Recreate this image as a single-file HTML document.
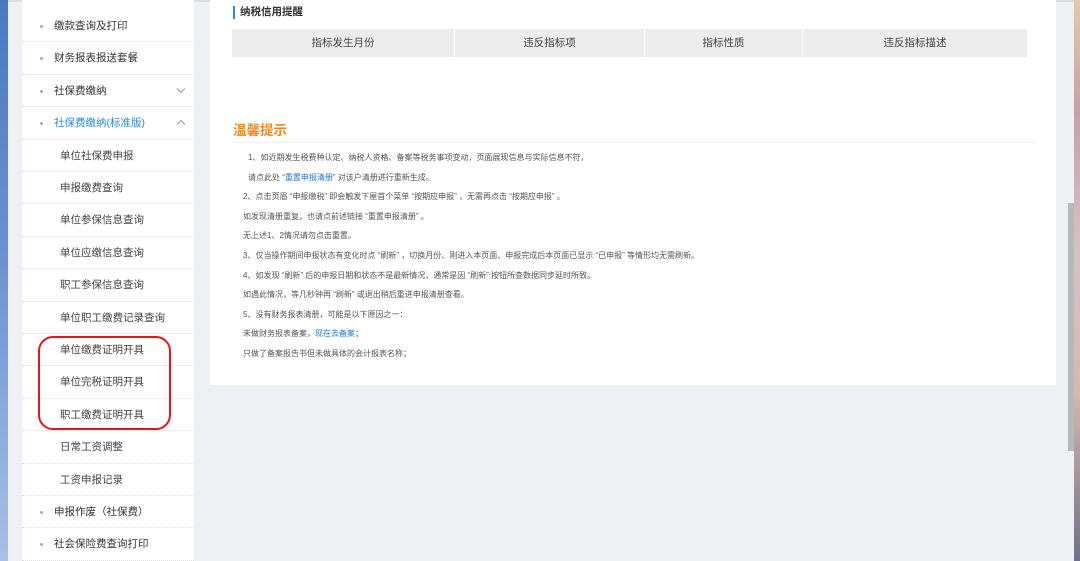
<!DOCTYPE html>
<html><head><meta charset="utf-8"><style>
*{margin:0;padding:0;box-sizing:border-box}
body{width:1080px;height:561px;overflow:hidden;background:#eef0f3;font-family:"Liberation Sans","Noto Sans CJK SC",sans-serif;position:relative}
.edge{position:absolute;left:0;top:0;width:8px;height:561px;background:linear-gradient(#4a78c0,#6f95d2 50%,#a9c0e6)}
.side{position:absolute;left:22px;top:0;width:172px;height:561px;background:#fff}
.it{position:absolute;left:0;width:172px;height:32.4px;border-bottom:1px dotted #ddd;font-size:10.5px;color:#333;line-height:32px}
.it.t{padding-left:32px}.it.s{padding-left:38px;color:#444}
.it.t:before{content:"";position:absolute;left:18px;top:15px;width:3px;height:3px;background:#aaa;border-radius:50%}
.arr{position:absolute;right:8px;top:12px}
.red{position:absolute;left:38px;top:336px;width:133px;height:94px;border:2.5px solid #e8141c;border-radius:15px}
.main{position:absolute;left:210px;top:0;width:846px;height:385px;background:#fff}
.ttl{position:absolute;left:23px;top:6px;font-size:10.5px;font-weight:bold;color:#333;border-left:2px solid #2a8ae0;padding-left:5px;line-height:13px}
.th{position:absolute;left:22px;top:29px;width:795px;height:28px;background:#ededed;display:flex;font-size:10.5px;color:#444;line-height:28px;text-align:center}
.th div{border-right:1px solid #fff}
.wh{position:absolute;left:23px;top:119px;font-size:13.5px;color:#f08a1c;font-weight:bold}
.hr{position:absolute;left:22px;top:142px;width:804px;height:1px;background:#eee}
.tx{position:absolute;left:33px;top:148px;font-size:8px;color:#555;line-height:19.6px;white-space:nowrap}
.tx a{color:#1a7ad8}
.sb{position:absolute;left:1068px;top:203px;width:6px;height:248px;background:#b8b8b8}
.re{position:absolute;left:1074px;top:0;width:6px;height:561px;background:linear-gradient(#e6c8a8,#c8a0a4 20%,#d8c0c4 45%,#d8b8a8 70%,#70708c)}
.top{position:absolute;left:0;top:0;width:1080px;height:2px;background:#ddd}
</style></head><body>
<div class="top"></div>
<div class="edge"></div>
<div class="side">
<div class="it t" style="top:10px">缴款查询及打印</div>
<div class="it t" style="top:42.4px">财务报表报送套餐</div>
<div class="it t" style="top:74.8px">社保费缴纳<svg class="arr" width="10" height="7" viewBox="0 0 10 7"><path d="M1 1.5L5 5.5L9 1.5" fill="none" stroke="#999" stroke-width="1"/></svg></div>
<div class="it t" style="top:107.2px;color:#2a8ae0">社保费缴纳(标准版)<svg class="arr" width="10" height="7" viewBox="0 0 10 7"><path d="M1 5.5L5 1.5L9 5.5" fill="none" stroke="#999" stroke-width="1"/></svg></div>
<div class="it s" style="top:139.6px">单位社保费申报</div>
<div class="it s" style="top:172px">申报缴费查询</div>
<div class="it s" style="top:204.4px">单位参保信息查询</div>
<div class="it s" style="top:236.8px">单位应缴信息查询</div>
<div class="it s" style="top:269.2px">职工参保信息查询</div>
<div class="it s" style="top:301.6px">单位职工缴费记录查询</div>
<div class="it s" style="top:334px">单位缴费证明开具</div>
<div class="it s" style="top:366.4px">单位完税证明开具</div>
<div class="it s" style="top:398.8px">职工缴费证明开具</div>
<div class="it s" style="top:431.2px">日常工资调整</div>
<div class="it s" style="top:463.6px">工资申报记录</div>
<div class="it t" style="top:496px">申报作废（社保费）</div>
<div class="it t" style="top:528.4px">社会保险费查询打印</div>
</div>
<div class="red"></div>
<div class="main">
<div class="ttl">纳税信用提醒</div>
<div class="th"><div style="width:223px">指标发生月份</div><div style="width:190px">违反指标项</div><div style="width:158px">指标性质</div><div style="width:224px;border:0">违反指标描述</div></div>
<div class="wh">温馨提示</div>
<div class="hr"></div>
<div class="tx">
<div style="padding-left:5px">1、如近期发生税费种认定、纳税人资格、备案等税务事项变动，页面展现信息与实际信息不符，</div>
<div style="padding-left:5px">请点此处 “<a>重置申报清册</a>” 对该户清册进行重新生成。</div>
<div>2、点击页眉 “申报缴税” 即会触发下屋首个菜单 “按期应申报” ，无需再点击 “按期应申报” 。</div>
<div>如发现清册重复，也请点前述链接 “重置申报清册” 。</div>
<div>无上述1、2情况请勿点击重置。</div>
<div>3、仅当操作期间申报状态有变化时点 “刷新” ，切换月份、刚进入本页面、申报完成后本页面已显示 “已申报” 等情形均无需刷新。</div>
<div>4、如发现 “刷新” 后的申报日期和状态不是最新情况，通常是因 “刷新” 按钮所查数据同步延时所致。</div>
<div>如遇此情况，等几秒钟再 “刷新” 或退出稍后重进申报清册查看。</div>
<div>5、没有财务报表清册，可能是以下原因之一：</div>
<div>未做财务报表备案，<a>现在去备案</a>；</div>
<div>只做了备案报告书但未做具体的会计报表名称；</div>
</div>
</div>
<div class="sb"></div>
<div class="re"></div>
</body></html>
